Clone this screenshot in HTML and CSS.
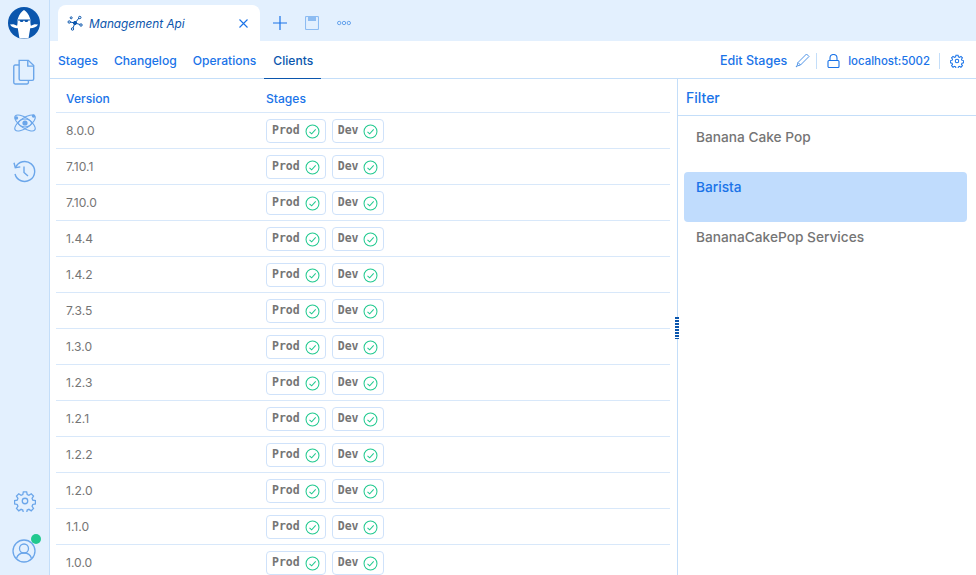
FILE: index.html
```html
<!DOCTYPE html>
<html lang="en">

<head>
    <meta charset="UTF-8" />
    <title>Management Api</title>
    <link rel="stylesheet" href="styles.css">
</head>

<body>
    <svg class="defs" xmlns="http://www.w3.org/2000/svg" width="0" height="0">
        <defs>
            <symbol id="check" viewBox="0 0 16 16">
                <circle cx="8" cy="8" r="6.9" fill="none" stroke="currentColor" stroke-width="1.1" />
                <path d="M4.800 8.300l2.300 2.200L11.400 5.800" fill="none" stroke="currentColor" stroke-width="1.1" />
            </symbol>
        </defs>
    </svg>

    <div class="app">
        <aside class="sidebar">
            <svg class="logo" width="32" height="32" viewBox="0 0 32 32">
                <circle cx="16" cy="16" r="16" fill="#0b56ad" />
                <path d="M16 3c2.200 1.200 4.600 4 6 8.200l.5 1.800c-.3 2 0 4.200.4 5.800l3.600-1.600 3.500.2c-1.500 2.500-4.300 3.800-7.800 3.800-.5 3.400-1 6.200-1.700 10.200H11.500c-.7-4-1.200-6.800-1.700-10.200-3.500 0-6.300-1.300-7.800-3.800l3.500-.2 3.600 1.600c.4-1.600.7-3.800.4-5.800l.5-1.800C11.400 7 13.800 4.200 16 3z" fill="#fff" />
                <path d="M9.800 12.400h12.400v1h-1.900c-.2 1.300-1 1.700-2.100 1.700-.9 0-1.500-.5-1.700-1.300h-1c-.2.800-.8 1.300-1.700 1.300-1.100 0-1.900-.4-2.100-1.700H9.800z" fill="#0b56ad" />
            </svg>
            <svg class="side-icon icon-files" width="26" height="28" viewBox="0 0 24 26" fill="none" stroke="#6ba6ea" stroke-width="1.300">
                <path d="M7.500 2.200h8.500l5 4.800v12.500a1.300 1.300 0 0 1-1.300 1.300H8.800a1.300 1.300 0 0 1-1.300-1.300z" />
                <path d="M15.500 2.500v5h5.200" />
                <path d="M7.500 6.500H3.800a1.300 1.300 0 0 0-1.300 1.300v15a1.300 1.300 0 0 0 1.300 1.300h11a1.300 1.300 0 0 0 1.300-1.300V21" />
            </svg>
            <svg class="side-icon icon-atom" width="24" height="22" viewBox="0 0 24 22" fill="none" stroke="#6ba6ea" stroke-width="1.100">
                <ellipse cx="12" cy="11" rx="12" ry="5" transform="rotate(35 12 11)" />
                <ellipse cx="12" cy="11" rx="12" ry="5" transform="rotate(-35 12 11)" />
                <ellipse cx="12" cy="11" rx="6.500" ry="4" />
                <circle cx="12" cy="11" r="2.600" fill="#6ba6ea" stroke="none" />
                <circle cx="3.500" cy="6" r="1.700" fill="#6ba6ea" stroke="none" />
                <circle cx="20.500" cy="4" r="1.700" fill="#6ba6ea" stroke="none" />
            </svg>
            <svg class="side-icon icon-history" width="24" height="24" viewBox="0 0 24 24" fill="none" stroke="#6ba6ea" stroke-width="1.400">
                <path d="M3.500 7.500A10 10 0 1 1 3 14" />
                <path d="M2 2.800l1.300 5 5-.9" />
                <path d="M12 6.500v6l4 3.500" />
            </svg>
            <div class="side-bottom">
                <svg class="side-icon" width="22" height="22" viewBox="0 0 24 24" fill="none" stroke="#6ba6ea" stroke-width="1.400">
                    <path d="M10.200 2h3.600l.6 2.900 1.900.8 2.500-1.600 2.500 2.500-1.600 2.500.8 1.900 2.900.6v3.600l-2.900.6-.8 1.900 1.600 2.500-2.500 2.500-2.500-1.600-1.900.8-.6 2.900h-3.600l-.6-2.900-1.900-.8-2.500 1.600-2.500-2.500 1.600-2.500-.8-1.900-2.900-.6v-3.600l2.900-.6.8-1.900-1.600-2.500 2.500-2.500 2.500 1.600 1.900-.8z" />
                    <circle cx="12" cy="12" r="3" />
                </svg>
                <div class="avatar">
                    <svg width="24" height="24" viewBox="0 0 24 24" fill="none" stroke="#6ba6ea" stroke-width="1.300">
                        <circle cx="12" cy="12" r="11" />
                        <circle cx="12" cy="9.500" r="4.500" />
                        <path d="M4.500 19.500c1-3.500 3.800-5.500 7.500-5.500s6.500 2 7.500 5.500" />
                    </svg>
                    <span class="dot"></span>
                </div>
            </div>
        </aside>

        <main class="content">
            <header class="tabbar">
                <div class="tab">
                    <svg width="16" height="16" viewBox="0 0 16 16" fill="none" stroke="#0b56ad" stroke-width="1">
                        <path d="M8 8L3 7M8 8l4-5M8 8l5 1.500M8 8l-2 5" />
                        <circle cx="8" cy="8" r="1.600" fill="#0b56ad" />
                        <circle cx="2.200" cy="7" r="1.200" />
                        <circle cx="4.200" cy="2.800" r="1" />
                        <circle cx="12.800" cy="2.500" r="1.200" />
                        <circle cx="14" cy="10" r="1.200" />
                        <circle cx="5.500" cy="14" r="1.200" />
                    </svg>
                    <span class="tab-title">Management Api</span>
                    <svg class="tab-close" width="9" height="9" viewBox="0 0 9 9" stroke="#1a73e8" stroke-width="1.100">
                        <path d="M.5.500l8 8M8.500.500l-8 8" />
                    </svg>
                </div>
                <svg class="bar-icon" width="14" height="14" viewBox="0 0 14 14" stroke="#1a73e8" stroke-width="1.200">
                    <path d="M7 0v14M0 7h14" />
                </svg>
                <svg class="bar-icon" width="14" height="14" viewBox="0 0 14 14" fill="none" stroke="#8dbcf2" stroke-width="1.100">
                    <rect x=".5" y=".5" width="13" height="13" rx="1" />
                    <path d="M3.500 .5v4h7v-4" fill="#8dbcf2" />
                </svg>
                <svg class="bar-icon" width="14" height="6" viewBox="0 0 14 6" fill="none" stroke="#5b9cea" stroke-width=".9">
                    <circle cx="2.200" cy="3" r="1.700" />
                    <circle cx="7" cy="3" r="1.700" />
                    <circle cx="11.800" cy="3" r="1.700" />
                </svg>
            </header>

            <nav class="navbar">
                <a class="nav-link">Stages</a>
                <a class="nav-link">Changelog</a>
                <a class="nav-link">Operations</a>
                <a class="nav-link active">Clients</a>
                <div class="nav-right">
                    <span class="edit">Edit Stages</span>
                    <svg width="15" height="15" viewBox="0 0 15 15" fill="none" stroke="#4f94e8" stroke-width="1">
                        <path d="M11.500 1l2.500 2.500-8.500 8.500-2.500-2.500zM3 9.500l-.8 2.800-1.200 1.700 1.700-1.200 2.800-.8" />
                    </svg>
                    <span class="sep"></span>
                    <svg width="13" height="14" viewBox="0 0 13 14" fill="none" stroke="#1a73e8" stroke-width="1.100">
                        <rect x="1" y="6.500" width="11" height="7" rx="1" />
                        <path d="M3 6.500V4a3.500 3.500 0 0 1 7 0v2.500" />
                    </svg>
                    <span class="host">localhost:5002</span>
                    <span class="sep"></span>
                    <svg width="14" height="14" viewBox="0 0 24 24" fill="none" stroke="#1a73e8" stroke-width="1.800">
                        <path d="M10.200 2h3.600l.6 2.900 1.900.8 2.500-1.600 2.500 2.500-1.600 2.500.8 1.900 2.900.6v3.600l-2.900.6-.8 1.900 1.600 2.500-2.500 2.500-2.500-1.600-1.900.8-.6 2.900h-3.600l-.6-2.900-1.900-.8-2.500 1.600-2.500-2.500 1.600-2.500-.8-1.900-2.900-.6v-3.600l2.900-.6.8-1.900-1.600-2.500 2.500-2.500 2.500 1.600 1.900-.8z" />
                        <circle cx="12" cy="12" r="3" />
                    </svg>
                </div>
            </nav>

            <div class="panes">
                <section class="clients">
                    <div class="row head"><span class="version">Version</span><span>Stages</span></div>
                    <div class="row"><span class="version">8.0.0</span><span class="badge">Prod <svg><use href="#check" /></svg></span><span class="badge">Dev <svg><use href="#check" /></svg></span></div>
                    <div class="row"><span class="version">7.10.1</span><span class="badge">Prod <svg><use href="#check" /></svg></span><span class="badge">Dev <svg><use href="#check" /></svg></span></div>
                    <div class="row"><span class="version">7.10.0</span><span class="badge">Prod <svg><use href="#check" /></svg></span><span class="badge">Dev <svg><use href="#check" /></svg></span></div>
                    <div class="row"><span class="version">1.4.4</span><span class="badge">Prod <svg><use href="#check" /></svg></span><span class="badge">Dev <svg><use href="#check" /></svg></span></div>
                    <div class="row"><span class="version">1.4.2</span><span class="badge">Prod <svg><use href="#check" /></svg></span><span class="badge">Dev <svg><use href="#check" /></svg></span></div>
                    <div class="row"><span class="version">7.3.5</span><span class="badge">Prod <svg><use href="#check" /></svg></span><span class="badge">Dev <svg><use href="#check" /></svg></span></div>
                    <div class="row"><span class="version">1.3.0</span><span class="badge">Prod <svg><use href="#check" /></svg></span><span class="badge">Dev <svg><use href="#check" /></svg></span></div>
                    <div class="row"><span class="version">1.2.3</span><span class="badge">Prod <svg><use href="#check" /></svg></span><span class="badge">Dev <svg><use href="#check" /></svg></span></div>
                    <div class="row"><span class="version">1.2.1</span><span class="badge">Prod <svg><use href="#check" /></svg></span><span class="badge">Dev <svg><use href="#check" /></svg></span></div>
                    <div class="row"><span class="version">1.2.2</span><span class="badge">Prod <svg><use href="#check" /></svg></span><span class="badge">Dev <svg><use href="#check" /></svg></span></div>
                    <div class="row"><span class="version">1.2.0</span><span class="badge">Prod <svg><use href="#check" /></svg></span><span class="badge">Dev <svg><use href="#check" /></svg></span></div>
                    <div class="row"><span class="version">1.1.0</span><span class="badge">Prod <svg><use href="#check" /></svg></span><span class="badge">Dev <svg><use href="#check" /></svg></span></div>
                    <div class="row"><span class="version">1.0.0</span><span class="badge">Prod <svg><use href="#check" /></svg></span><span class="badge">Dev <svg><use href="#check" /></svg></span></div>
                </section>

                <aside class="filter">
                    <span class="grip"></span>
                    <h2 class="filter-title">Filter</h2>
                    <ul class="filter-list">
                        <li class="filter-item">Banana Cake Pop</li>
                        <li class="filter-item selected">Barista</li>
                        <li class="filter-item">BananaCakePop Services</li>
                    </ul>
                </aside>
            </div>
        </main>
    </div>
</body>

</html>
```

FILE: styles.css
```css
:root {
    --blue: #1a73e8;
    --dark-blue: #0b56ad;
    --line: #c4def9;
    --row-line: #d8e8fa;
    --pale: #e3f0fe;
    --grey: #757575;
    --green: #21c98f;
}

* {
    box-sizing: border-box;
}

html,
body {
    margin: 0;
    height: 100%;
    overflow: hidden;
}

body {
    font-family: Inter, "Noto Sans", sans-serif;
    font-size: 12.1px;
    font-weight: 500;
    color: var(--grey);
    background: #fff;
}

.defs {
    position: absolute;
}

.app {
    display: flex;
    height: 575px;
}

/* Left rail */
.sidebar {
    flex: 0 0 50px;
    display: flex;
    flex-direction: column;
    align-items: center;
    padding-top: 7px;
    background: var(--pale);
    border-right: 1px solid var(--line);
}

.logo {
    flex: none;
    margin: 0 1px 19px 0;
}

.side-icon {
    display: block;
    flex: none;
}

.icon-files {
    margin-left: -1px;
}

.icon-atom {
    margin-top: 26px;
}

.icon-history {
    margin: 26px 0 0 -1px;
}

.side-bottom {
    margin-top: auto;
    display: flex;
    flex-direction: column;
    align-items: center;
    gap: 27px;
    padding-bottom: 12px;
}

.avatar {
    position: relative;
    height: 24px;
    margin-right: 1px;
}

.dot {
    position: absolute;
    top: -5px;
    right: -5px;
    width: 10px;
    height: 10px;
    border-radius: 50%;
    background: var(--green);
}

.content {
    flex: 1;
    min-width: 0;
    display: flex;
    flex-direction: column;
}

/* Tabs */
.tabbar {
    flex: 0 0 41px;
    display: flex;
    align-items: flex-end;
    padding-left: 8px;
    background: var(--pale);
}

.tab {
    width: 202px;
    height: 36px;
    display: flex;
    align-items: center;
    padding: 0 12px 0 9px;
    background: #fff;
    border-radius: 8px 8px 0 0;
}

.tab-title {
    margin: 1px 0 0 6px;
    font-size: 11.8px;
    font-style: italic;
    font-weight: 400;
    color: var(--dark-blue);
}

.tab-close {
    margin-left: auto;
}

.bar-icon {
    align-self: center;
    margin-top: 5px;
}

.tab+.bar-icon {
    margin-left: 13px;
}

.bar-icon+.bar-icon {
    margin-left: 18px;
}

/* Sub navigation */
.navbar {
    flex: 0 0 38px;
    display: flex;
    align-items: stretch;
    border-bottom: 1px solid var(--line);
}

.nav-link {
    display: flex;
    align-items: center;
    padding: 2px 8px 0;
    color: var(--blue);
}

.nav-link.active {
    padding: 2px 8px 0 9px;
    color: var(--dark-blue);
    border-bottom: 1px solid var(--dark-blue);
    margin-bottom: -1px;
}

.nav-right {
    margin-left: auto;
    display: flex;
    align-items: center;
    gap: 8px;
    padding: 2px 12px 0 0;
    color: var(--blue);
    font-size: 12.5px;
}

.sep {
    width: 1px;
    height: 16px;
    margin-left: -2px;
    margin-right: 2px;
    background: var(--line);
}

.host {
    margin-right: 3px;
    font-size: 11.4px;
}

/* Client table */
.panes {
    flex: 1;
    min-height: 0;
    display: flex;
}

.clients {
    flex: 0 0 628px;
    padding: 0 7px 0 6px;
    overflow: hidden;
    border-right: 1px solid var(--line);
}

.row {
    height: 36px;
    display: flex;
    align-items: center;
    gap: 6px;
    padding-left: 10px;
    border-bottom: 1px solid var(--row-line);
    font-weight: 400;
}

.row.head {
    height: 34px;
    color: var(--blue);
    font-weight: 500;
    padding-top: 5px;
}

.version {
    flex: 0 0 194px;
}

.badge {
    height: 24px;
    display: flex;
    align-items: center;
    gap: 5px;
    padding: 0 5px 2px;
    border: 1px solid #cfe2fa;
    border-radius: 4px;
    font-family: "DejaVu Sans Mono", monospace;
    font-size: 11.5px;
    font-weight: 700;
    white-space: nowrap;
}

.badge svg {
    width: 15px;
    height: 15px;
    margin-top: 3px;
    color: var(--green);
}

/* Filter panel */
.filter {
    position: relative;
    flex: 1;
    min-width: 0;
}

.grip {
    position: absolute;
    top: 238px;
    left: -3px;
    width: 4px;
    height: 22px;
    background: repeating-linear-gradient(to bottom, var(--dark-blue) 0 2px, #fff 2px 3px);
}

.filter-title {
    height: 37px;
    margin: 0;
    padding: 10px 8px 0;
    border-bottom: 1px solid var(--line);
    font-size: 14px;
    font-weight: 500;
    color: var(--blue);
}

.filter-list {
    list-style: none;
    margin: 6px 9px 0 6px;
    padding: 0;
}

.filter-item {
    height: 50px;
    padding: 7px 12px;
    font-size: 13.7px;
    line-height: 17px;
    border-radius: 4px;
}

.filter-item.selected {
    background: #c0dcfd;
    color: var(--blue);
}
```
